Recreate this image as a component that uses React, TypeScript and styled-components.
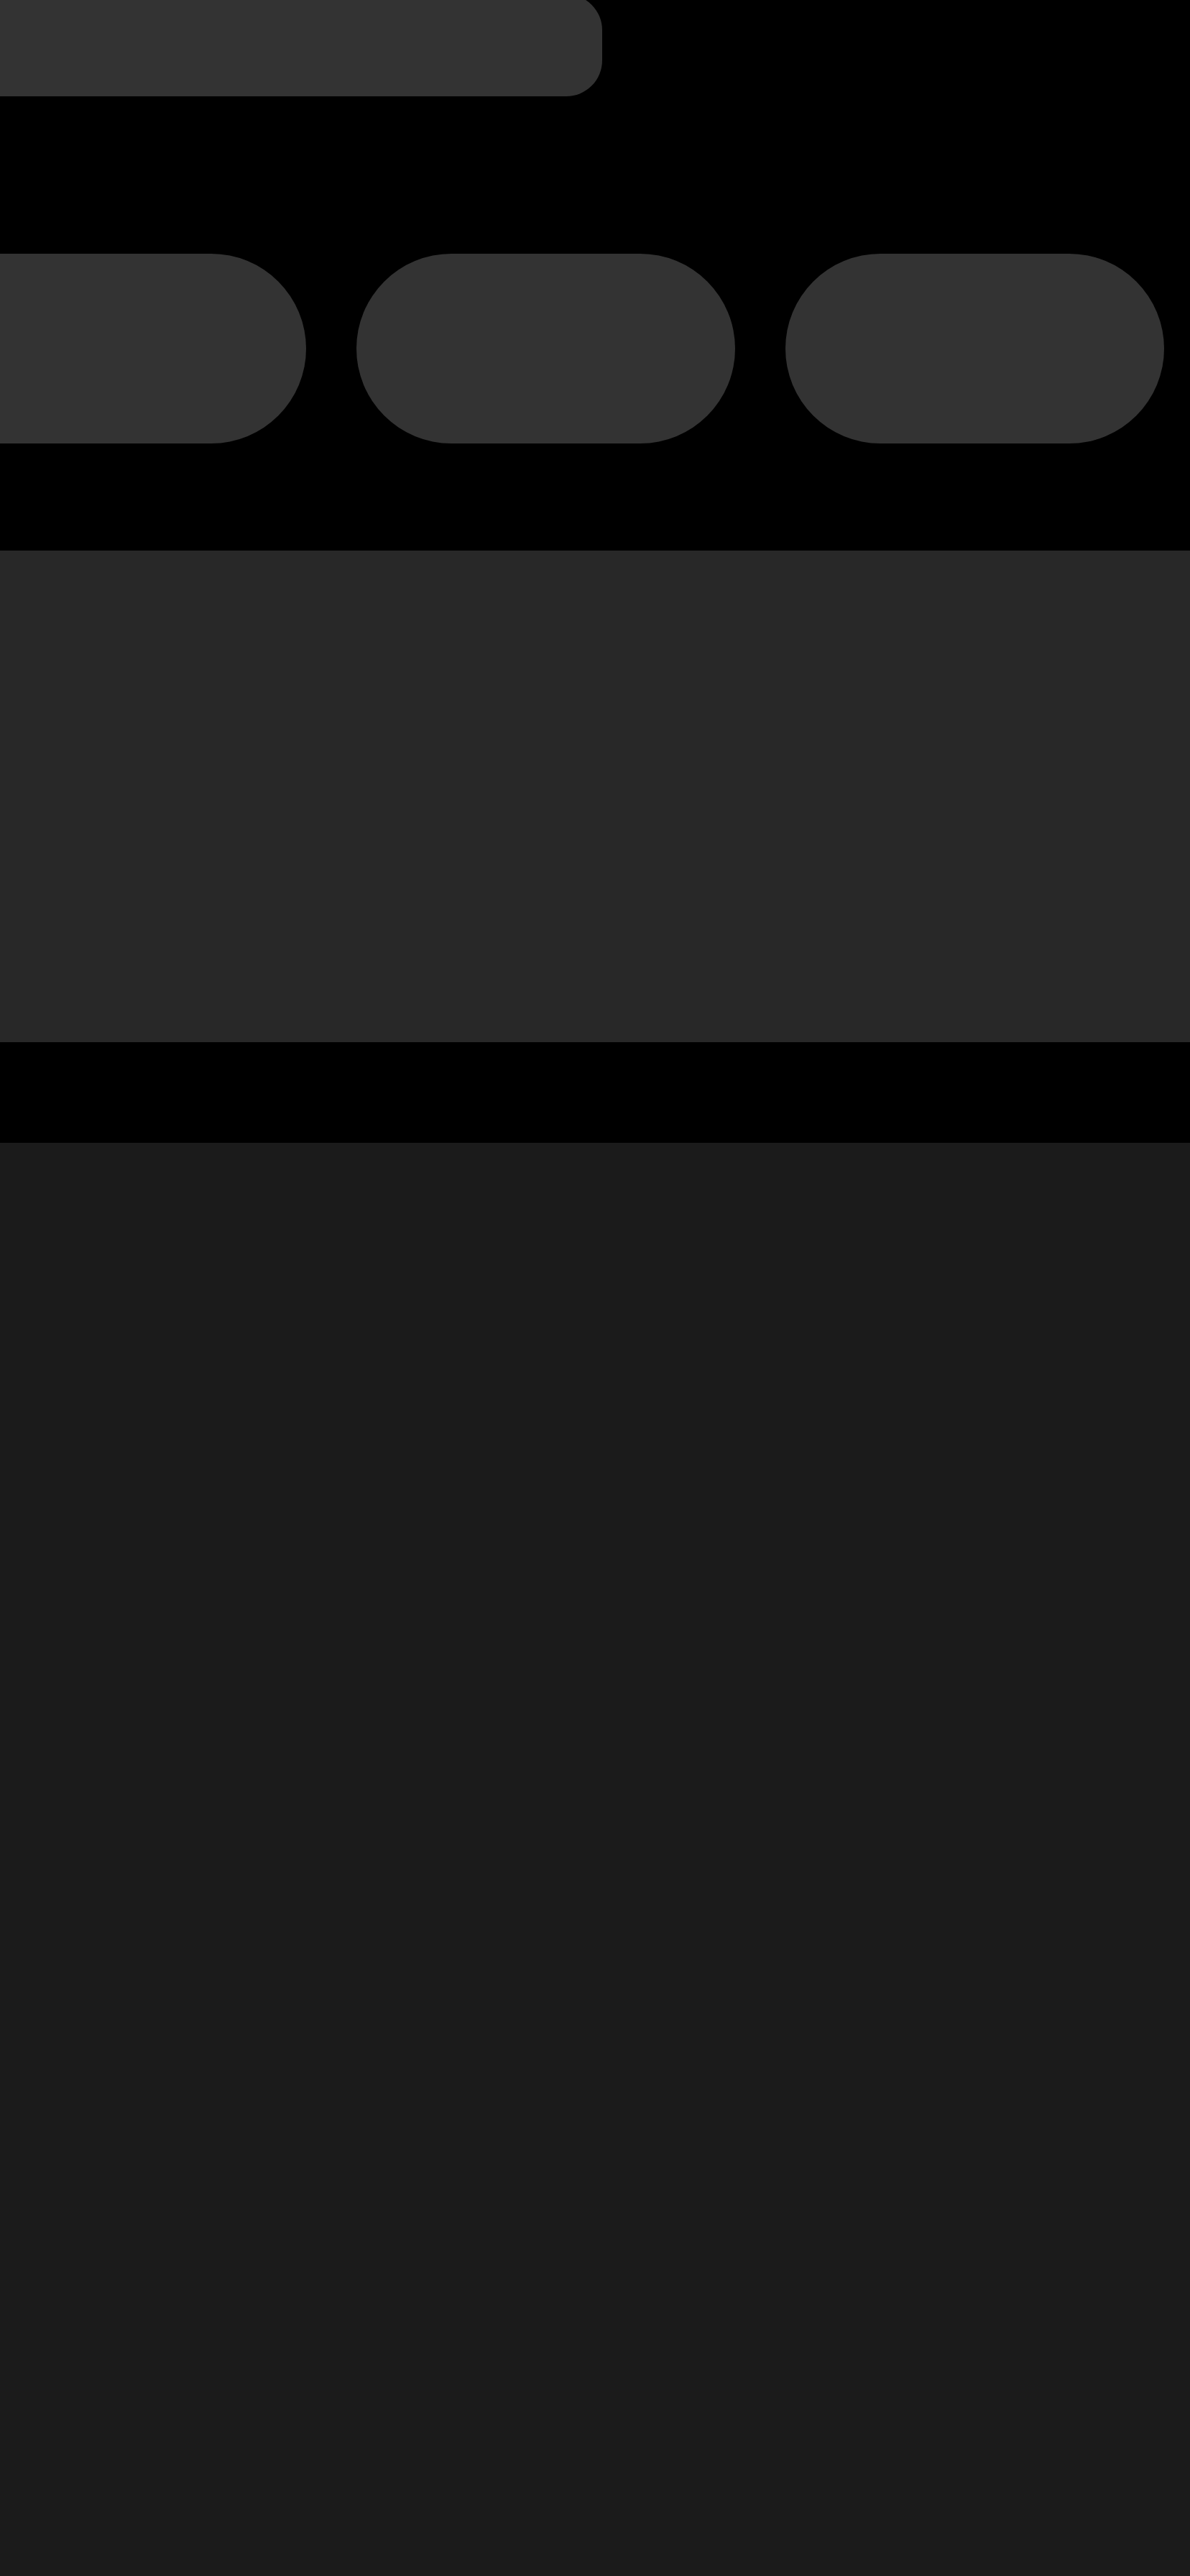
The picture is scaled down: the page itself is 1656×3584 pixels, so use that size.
import React from "react";
import styled, { createGlobalStyle } from "styled-components";

const Global = createGlobalStyle`
  html, body {
    margin: 0;
    padding: 0;
    background: #000000;
    font-family: "Liberation Sans", Arial, sans-serif;
  }
  #root {
    min-height: 3584px;
  }
`;

const Page = styled.div`
  display: flex;
  flex-direction: column;
  width: 1656px;
  min-height: 3584px;
  overflow: hidden;
  background: #000000;
`;

const TopBar = styled.div`
  width: 838px;
  height: 142px;
  margin-top: -8px;
  background: #333333;
  border-radius: 0 50px 50px 0;
`;

const PillRow = styled.div`
  display: flex;
  gap: 70px;
  margin-top: 219px;
  margin-left: -200px;
`;

const Pill = styled.div<{ $width: number }>`
  flex: 0 0 ${(p) => p.$width}px;
  height: 264px;
  background: #333333;
  border-radius: 132px;
`;

const Panel = styled.section`
  margin-top: 149px;
  height: 684px;
  background: #282828;
`;

const Body = styled.main`
  margin-top: 140px;
  flex: 1;
  background: #1b1b1b;
`;

export default function App() {
  return (
    <>
      <Global />
      <Page>
        <TopBar />
        <PillRow>
          <Pill $width={626} />
          <Pill $width={527} />
          <Pill $width={527} />
        </PillRow>
        <Panel />
        <Body />
      </Page>
    </>
  );
}
